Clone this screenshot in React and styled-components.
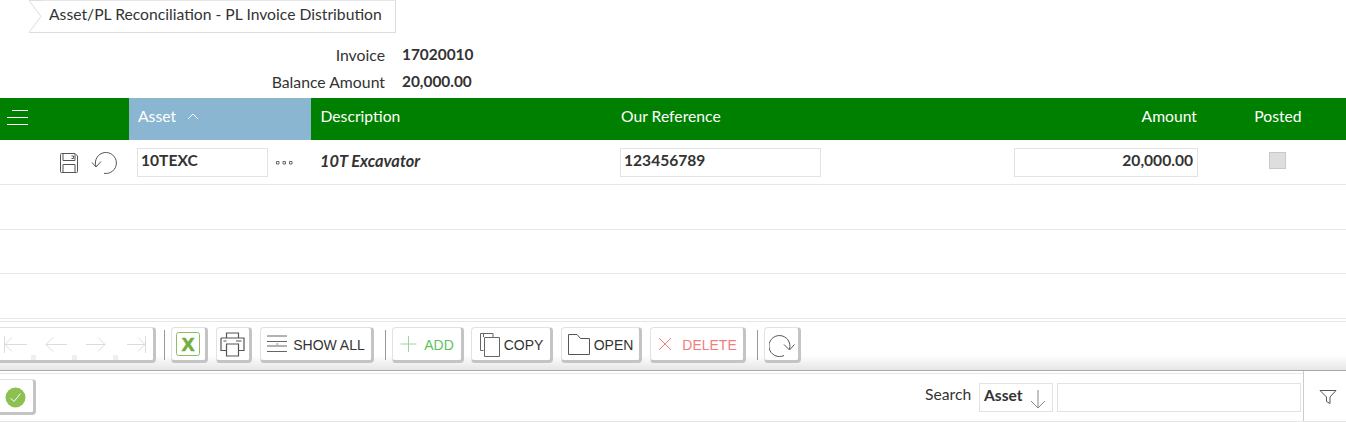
import React from "react";
import styled, { createGlobalStyle } from "styled-components";

const Global = createGlobalStyle`
  html, body { margin: 0; padding: 0; background: #fff; overflow: hidden; }
  body { font-family: Lato, "Open Sans", sans-serif; color: #333; }
`;

const Page = styled.div`
  width: 1346px;
  height: 422px;
  overflow: hidden;
  display: flex;
  flex-direction: column;
`;

const BreadcrumbBar = styled.div`
  height: 33px;
  padding-left: 29px;
  display: flex;
`;

const Crumb = styled.div`
  position: relative;
  width: 367px;
  height: 33px;
  box-sizing: border-box;
  border: 1px solid #ddd;
  border-left: none;
  border-top-color: #e6e6e6;
  padding-left: 20px;
  font-size: 15.7px;
  line-height: 27px;
  color: #333;
  svg { position: absolute; left: 0; top: -1px; }
`;

const InfoBlock = styled.div`
  height: 65px;
  padding-top: 8px;
  box-sizing: border-box;
  display: grid;
  grid-template-columns: 385px auto;
  grid-auto-rows: 27px;
  column-gap: 17px;
  font-size: 15.8px;
  line-height: 27px;
`;

const InfoLabel = styled.div`
  text-align: right;
`;

const InfoValue = styled.div`
  font-weight: 700;
  font-size: 15.4px;
`;

const cols = "129px 182px 300px 220px 379px 136px";

const Header = styled.div`
  display: grid;
  grid-template-columns: ${cols};
  height: 42px;
  background: #008000;
  color: #fff;
  font-size: 15.7px;
  line-height: 37px;
`;

const HeadCell = styled.div`
  padding: 0 ${p => p.$pr ?? 0}px 0 ${p => p.$pl ?? 0}px;
  text-align: ${p => p.$align ?? "left"};
`;

const SortCell = styled.div`
  background: #8ab6d1;
  padding-left: 9px;
  display: flex;
  align-items: flex-start;
  gap: 11px;
  svg { margin-top: 14px; }
`;

const MenuCell = styled.div`
  padding: 8px 0 0 7px;
  line-height: 0;
`;

const Row = styled.div`
  display: grid;
  grid-template-columns: ${cols};
  height: ${p => p.$h}px;
  box-sizing: border-box;
  border-bottom: 1px solid #e6e6e6;
`;

const Cell = styled.div`
  display: flex;
  align-items: center;
  padding-top: 1px;
  padding-left: ${p => p.$pl ?? 0}px;
  padding-right: ${p => p.$pr ?? 0}px;
  justify-content: ${p => p.$justify ?? "flex-start"};
  gap: ${p => p.$gap ?? 0}px;
`;

const Field = styled.div`
  width: ${p => p.$w}px;
  height: 29px;
  box-sizing: border-box;
  border: 1px solid #e3e3e3;
  padding: 0 ${p => (p.$right ? 4 : 3)}px;
  font-size: 15.6px;
  font-weight: 700;
  line-height: 22px;
  color: #333;
  text-align: ${p => (p.$right ? "right" : "left")};
  flex: none;
`;

const Italic = styled.span`
  font-weight: 700;
  font-style: italic;
  color: #333;
  font-size: 16.4px;
  margin-bottom: 5px;
`;

const Check = styled.div`
  width: 17px;
  height: 17px;
  box-sizing: border-box;
  background: #dedede;
  border: 1px solid #c9c9c9;
  margin: 0 1px 4px 0;
`;

const Toolbar = styled.div`
  margin-top: 2px;
  height: 50px;
  flex: none;
  box-sizing: border-box;
  border-top: 1px solid #e6e6e6;
  border-bottom: 1px solid #a8a8a8;
  background: linear-gradient(#fff 0, #fff 33px, #e6e6e6 100%);
  display: flex;
  align-items: flex-start;
  padding-top: 5px;
`;

const Btn = styled.div`
  position: relative;
  height: 36px;
  width: ${p => p.$w}px;
  margin-left: ${p => p.$ml ?? 0}px;
  flex: none;
  box-sizing: border-box;
  background: #fff;
  border: 1px solid #e2e2e2;
  border-right: 3px solid #c4c4c4;
  border-bottom: 3px solid #c4c4c4;
  border-radius: 4px;
  display: flex;
  align-items: center;
  justify-content: ${p => p.$justify ?? "center"};
  gap: ${p => p.$gap ?? 4}px;
  padding-left: ${p => p.$pl ?? 0}px;
  padding-right: ${p => p.$pr ?? 0}px;
  font-family: "Liberation Sans", Arial, sans-serif;
  font-size: 14px;
  color: ${p => p.$color ?? "#333"};
`;

const BtnLabel = styled.span`
  margin-top: 2px;
`;

const Notch = styled.span`
  position: absolute;
  bottom: 0;
  left: ${p => p.$x}px;
  width: 5px;
  height: 5px;
  background: #efefef;
`;

const Sep = styled.div`
  width: 1px;
  height: 30px;
  background: #999;
  margin: 3px 0 0 ${p => p.$ml}px;
  flex: none;
`;

const BottomBar = styled.div`
  height: 51px;
  flex: none;
  box-sizing: border-box;
  border-bottom: 1px solid #e6e6e6;
  display: flex;
  align-items: stretch;
`;

const BottomMain = styled.div`
  width: 1303px;
  flex: none;
  box-sizing: border-box;
  border-top: 1px solid #e8e8e8;
  margin-top: 2px;
  display: flex;
  align-items: flex-start;
  padding-top: 5px;
`;

const FilterCell = styled.div`
  flex: 1;
  border-left: 1px solid #ccc;
  display: flex;
  align-items: center;
  justify-content: center;
  padding-left: 5px;
  padding-top: 2px;
`;

const SearchLabel = styled.div`
  margin-left: 889px;
  font-size: 15.7px;
  line-height: 30px;
  width: 54px;
  flex: none;
  height: 30px;
  white-space: nowrap;
`;

const Select = styled.div`
  width: 74px;
  height: 29px;
  margin-top: 4px;
  box-sizing: border-box;
  border: 1px solid #e3e3e3;
  font-size: 15.6px;
  font-weight: 700;
  display: flex;
  align-items: center;
  padding: 0 0 6px 4px;
  gap: 6px;
  flex: none;
  svg { margin-top: 9px; }
`;

const SearchInput = styled.div`
  width: 244px;
  height: 29px;
  margin: 4px 0 0 4px;
  box-sizing: border-box;
  border: 1px solid #e3e3e3;
  flex: none;
`;

const Ic = ({ w = 24, h = 24, children, stroke = "#555", sw = 1 }) => (
  <svg width={w} height={h} viewBox={`0 0 ${w} ${h}`} fill="none" stroke={stroke} strokeWidth={sw}>
    {children}
  </svg>
);

export default function App() {
  return (
    <Page>
      <Global />
      <BreadcrumbBar>
        <Crumb>
          <svg width="14" height="34" viewBox="0 0 14 34" fill="none" stroke="#ddd">
            <path d="M0 .5H13M0 32.500H13M0 .5L12 16.500L0 32.500" />
          </svg>
          Asset/PL Reconciliation - PL Invoice Distribution
        </Crumb>
      </BreadcrumbBar>
      <InfoBlock>
        <InfoLabel>Invoice</InfoLabel>
        <InfoValue>17020010</InfoValue>
        <InfoLabel>Balance Amount</InfoLabel>
        <InfoValue>20,000.00</InfoValue>
      </InfoBlock>
      <Header>
        <MenuCell>
          <Ic w={22} h={22} stroke="#fff">
            <path d="M5 4.500H21M0 11.500H21M0 18.500H21" />
          </Ic>
        </MenuCell>
        <SortCell>
          Asset
          <Ic w={12} h={10} stroke="#fff">
            <path d="M1 7L6 2L11 7" />
          </Ic>
        </SortCell>
        <HeadCell $pl={9.5}>Description</HeadCell>
        <HeadCell $pl={10}>Our Reference</HeadCell>
        <HeadCell $align="right" $pr={13}>Amount</HeadCell>
        <HeadCell $align="center">Posted</HeadCell>
      </Header>
      <Row $h={45}>
        <Cell $justify="flex-end" $pr={12} $gap={12}>
          <Ic w={20} h={22} stroke="#555">
            <path d="M1.500 2.500Q1.500 1.500 2.500 1.500H16L18.500 4V19.500Q18.500 20.500 17.500 20.500H2.500Q1.500 20.500 1.500 19.500Z" />
            <path d="M4 2V8.500H16V2M12.500 4H14.500V6.500H12.500M4 20V12.500H16V20" />
          </Ic>
          <Ic w={26} h={22} stroke="#555">
            <path d="M5 14.500A10.500 10.500 0 1 1 13 21.300" />
            <path d="M1 10.500L5 15L10 9.500" />
          </Ic>
        </Cell>
        <Cell $pl={8} $gap={7}>
          <Field $w={131}>10TEXC</Field>
          <Ic w={20} h={6} stroke="#666">
            <path d="M1.500 1.500H4V4H1.500ZM8 1.500H10.500V4H8ZM14.500 1.500H17V4H14.500Z" />
          </Ic>
        </Cell>
        <Cell $pl={9}>
          <Italic>10T Excavator</Italic>
        </Cell>
        <Cell $pl={9}>
          <Field $w={201}>123456789</Field>
        </Cell>
        <Cell $justify="flex-end" $pr={12}>
          <Field $w={184} $right>20,000.00</Field>
        </Cell>
        <Cell $justify="center">
          <Check />
        </Cell>
      </Row>
      <Row $h={45} />
      <Row $h={44} />
      <Row $h={45} />
      <Toolbar>
        <Btn $w={166} $ml={-10} $justify="flex-start" $pl={12} $gap={17}>
          <Ic w={24} h={21} stroke="#dcdcdc">
            <path d="M1.500 2V19M24 10.500H2M9 3.500L2 10.500L9 17.500" />
          </Ic>
          <Ic w={24} h={21} stroke="#dcdcdc">
            <path d="M23 10.500H2M9 3.500L2 10.500L9 17.500" />
          </Ic>
          <Ic w={24} h={21} stroke="#dcdcdc">
            <path d="M1 10.500H20M13 3.500L20 10.500L13 17.500" />
          </Ic>
          <Ic w={24} h={21} stroke="#dcdcdc">
            <path d="M1 10.500H19M12 3.500L19 10.500L12 17.500M19.500 2V19" />
          </Ic>
          <Notch $x={40} />
          <Notch $x={81} />
          <Notch $x={122} />
        </Btn>
        <Sep $ml={8} />
        <Btn $w={37} $ml={6}>
          <svg width="24" height="24" viewBox="0 0 24 24" fill="none" style={{ marginLeft: -1 }}>
            <rect x=".5" y=".5" width="23" height="23" rx="2" stroke="#8cc063" />
            <text x="12" y="18.500" textAnchor="middle" fontFamily="Liberation Sans" fontWeight="700" fontSize="19" fill="#6fae3f" stroke="#6fae3f" strokeWidth=".7">X</text>
          </svg>
        </Btn>
        <Btn $w={36} $ml={8} $pr={2}>
          <Ic w={25} h={25} stroke="#555" sw={1.2}>
            <path d="M6.500 6V1H18.500V6M1 6H24V18.500H18.500M6.500 18.500H1V6M6.500 12H18.500V24H6.500ZM3.500 9H6.500M16 9H21.500" />
          </Ic>
        </Btn>
        <Btn $w={114} $ml={8} $gap={6}>
          <Ic w={20} h={18} stroke="#666">
            <path d="M0 1H20M0 6.500H20M0 11H20M0 16.500H20M9.500 9H11" />
          </Ic>
          <BtnLabel>SHOW ALL</BtnLabel>
        </Btn>
        <Sep $ml={11} />
        <Btn $w={72} $ml={6} $color="#5cc35c" $gap={7}>
          <Ic w={17} h={18} stroke="#9bd69b">
            <path d="M8.500 1V17M.5 9H16.500" />
          </Ic>
          <BtnLabel>ADD</BtnLabel>
        </Btn>
        <Btn $w={82} $ml={7} $gap={4}>
          <Ic w={21} h={25} stroke="#666">
            <path d="M4.500 5V1.500H14V5M1.500 18.500H4.500M1.500 1.500V18.500M1.500 1.500H10M5.500 5.500H20.500V24.500H5.500Z" />
          </Ic>
          <BtnLabel>COPY</BtnLabel>
        </Btn>
        <Btn $w={81} $ml={8} $gap={4}>
          <Ic w={22} h={21} stroke="#555">
            <path d="M.5 .5H9L12.500 4.500H21.500V20.500H.5Z" />
          </Ic>
          <BtnLabel>OPEN</BtnLabel>
        </Btn>
        <Btn $w={96} $ml={8} $color="#f47c7c" $gap={9}>
          <Ic w={16} h={16} stroke="#f47c7c">
            <path d="M2 2L14 14M14 2L2 14" />
          </Ic>
          <BtnLabel>DELETE</BtnLabel>
        </Btn>
        <Sep $ml={11} />
        <Btn $w={37} $ml={6} $justify="flex-start" $pl={4}>
          <Ic w={26} h={25} stroke="#555">
            <path d="M15 23.500A10.500 10.500 0 1 1 20.500 17" />
            <path d="M15 12.500L20.500 18L25.500 12.500" />
          </Ic>
        </Btn>
      </Toolbar>
      <BottomBar>
        <BottomMain>
          <Btn $w={47} $ml={-11} $justify="flex-end">
            <svg width="21" height="21" viewBox="0 0 21 21" style={{ margin: "3px 7px 0 0" }}>
              <circle cx="10.500" cy="10.500" r="10" fill="#8cc051" />
              <path d="M5.500 11L9 14.500L15.500 6.500" fill="none" stroke="#fff" />
            </svg>
          </Btn>
          <SearchLabel>Search</SearchLabel>
          <Select>
            Asset
            <Ic w={18} h={20} stroke="#888">
              <path d="M9 1V19M2 12L9 19L16 12" />
            </Ic>
          </Select>
          <SearchInput />
        </BottomMain>
        <FilterCell>
          <Ic w={18} h={16} stroke="#555">
            <path d="M1 1.500H17L11 8V14.500L7.500 12.500V8Z" />
          </Ic>
        </FilterCell>
      </BottomBar>
    </Page>
  );
}
